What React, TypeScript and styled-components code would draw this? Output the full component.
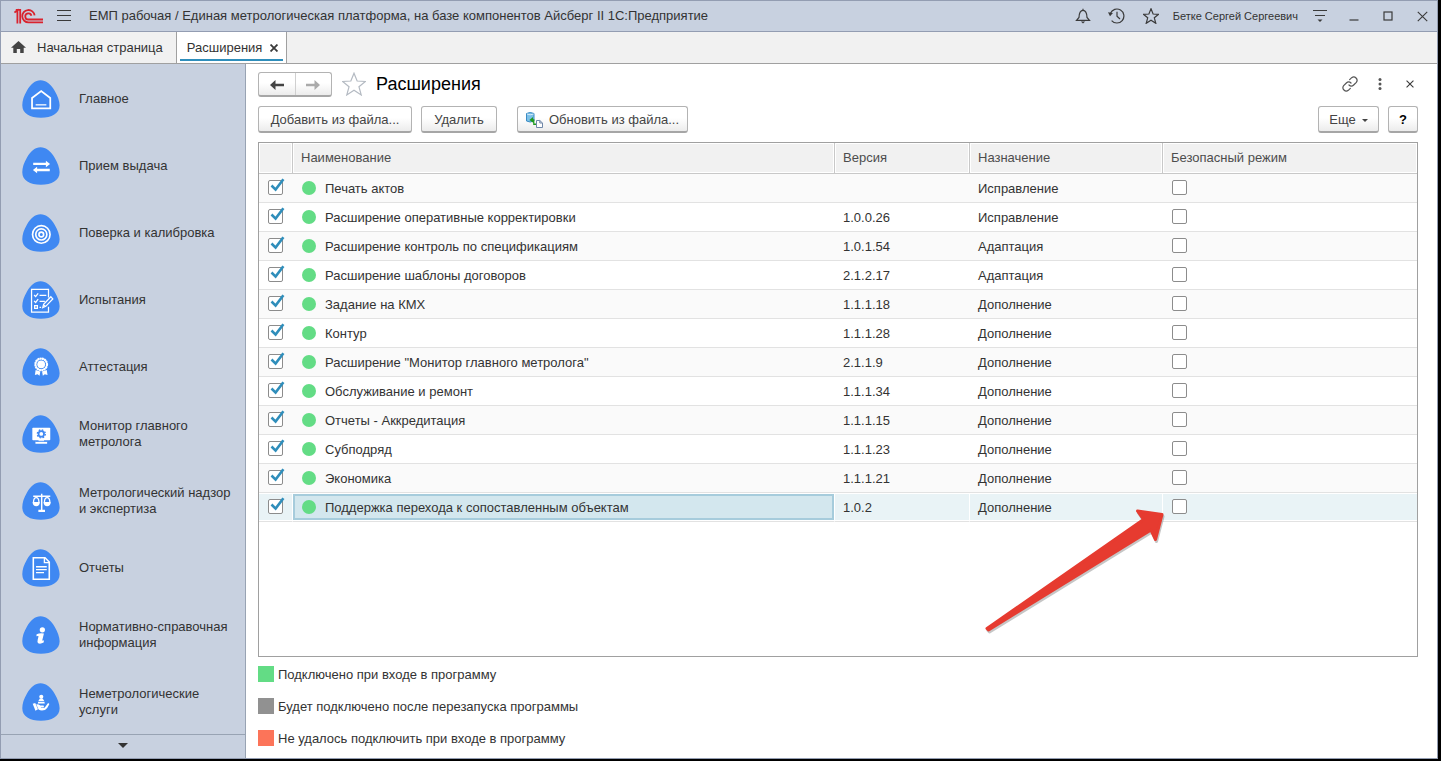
import React from "react";
import styled, { createGlobalStyle, css } from "styled-components";

const GlobalStyle = createGlobalStyle`
  *, *::before, *::after { box-sizing: border-box; }
  body {
    margin: 0;
    background: #000;
    color: #333;
    font-family: "Liberation Sans", Arial, sans-serif;
    font-size: 13px;
    line-height: 16px;
  }
  button { font: inherit; color: inherit; }
`;

const Desktop = styled.div`
  display: flex;
  min-height: 100vh;
  padding: 0 3px 2px 0;
  background: #000;
`;

const Window = styled.div`
  flex: 1;
  min-width: 0;
  display: flex;
  flex-direction: column;
  background: #fff;
  border: 1px solid #939db2;
`;

const TitleBar = styled.header`
  display: flex;
  align-items: center;
  gap: 10px;
  height: 31px;
  padding: 0 3px 0 13px;
  background: #c8d1e0;
  border-bottom: 1px solid #939db2;
`;

const AppTitle = styled.div`
  flex: 1;
  min-width: 0;
  margin-left: 5px;
  font-size: 13px;
  white-space: nowrap;
  overflow: hidden;
`;

const UserName = styled.span`
  font-size: 11px;
  white-space: nowrap;
`;

const IconButton = styled.button<{ $size?: number }>`
  display: flex;
  align-items: center;
  justify-content: center;
  flex: none;
  width: ${(p) => p.$size ?? 24}px;
  height: 24px;
  padding: 0;
  border: 0;
  background: none;
  color: #3a3a3a;
`;

const TabBar = styled.nav`
  display: flex;
  height: 32px;
  background: #f1f1f1;
  border-bottom: 1px solid #a0a0a0;
`;

const Tab = styled.div<{ $active?: boolean }>`
  position: relative;
  display: flex;
  align-items: center;
  padding: 0 13px 0 10px;
  border-right: 1px solid #a0a0a0;
  ${(p) =>
    p.$active &&
    css`
      gap: 4px;
      padding: 0 4px 0 10px;
      background: #fff;
      &::after {
        content: "";
        position: absolute;
        left: 3px;
        right: 3px;
        bottom: 2px;
        height: 2px;
        background: #2f8ebb;
      }
    `}
`;

const TabLink = styled.a`
  display: flex;
  align-items: center;
  gap: 11px;
  color: #333;
  text-decoration: none;
  white-space: nowrap;
`;

const Body = styled.div`
  flex: 1;
  display: flex;
`;

const Sidebar = styled.aside`
  flex: none;
  display: flex;
  flex-direction: column;
  width: 245px;
  background: #c8d1e0;
  border-right: 1px solid #98a3b3;
`;

const SectionLink = styled.a`
  display: flex;
  align-items: center;
  gap: 19px;
  height: 67px;
  padding: 2px 12px 0 21px;
  color: #333;
  text-decoration: none;
`;

const SectionIcon = styled.svg`
  flex: none;
  width: 38px;
  height: 38px;
`;

const ScrollDown = styled.button`
  display: flex;
  align-items: center;
  justify-content: center;
  height: 24px;
  margin-top: auto;
  padding: 0 0 3px;
  border: 0;
  border-top: 1px solid #98a3b3;
  background: none;
`;

const Main = styled.main`
  flex: 1;
  min-width: 0;
  display: flex;
  flex-direction: column;
  padding: 8px 19px 12px 12px;
`;

const PageHeader = styled.div`
  display: flex;
  align-items: flex-start;
  height: 25px;
`;

const raised = css`
  border: 1px solid #b3b3b3;
  border-bottom: 2px solid #a6a6a6;
  border-radius: 3px;
  background: linear-gradient(#fff 45%, #ececec);
`;

const HistoryButtons = styled.div`
  ${raised}
  display: flex;
  width: 74px;
  height: 25px;
`;

const HistoryButton = styled.button`
  flex: 1;
  display: flex;
  align-items: center;
  justify-content: center;
  padding: 2px 0 0;
  border: 0;
  background: none;
  & + & {
    border-left: 1px solid #d0d0d0;
  }
`;

const FavoriteButton = styled(IconButton)`
  margin: 0 10px;
`;

const PageTitle = styled.h1`
  flex: 1;
  margin: 0;
  color: #000;
  font-size: 18px;
  font-weight: 400;
  line-height: 24px;
`;

const HeaderActions = styled.div`
  display: flex;
  gap: 14px;
`;

const Toolbar = styled.div`
  display: flex;
  gap: 9px;
  margin: 9px 0;
`;

const ToolButton = styled.button<{ $width: number; $apart?: boolean; $strong?: boolean }>`
  ${raised}
  display: flex;
  align-items: center;
  justify-content: center;
  gap: 6px;
  min-width: ${(p) => p.$width}px;
  height: 27px;
  margin-left: ${(p) => (p.$apart ? 11 : 0)}px;
  padding: 2px 6px 0;
  color: ${(p) => (p.$strong ? "#000" : "#444")};
  font-weight: ${(p) => (p.$strong ? 700 : 400)};
  white-space: nowrap;
`;

const Spacer = styled.div`
  flex: 1;
`;

const TableFrame = styled.div`
  position: relative;
  flex: 1;
  border: 1px solid #a0a0a0;
`;

const Grid = styled.table`
  width: 100%;
  table-layout: fixed;
  border-collapse: separate;
  border-spacing: 0;
`;

const Col = styled.col<{ $width?: number }>`
  width: ${(p) => (p.$width ? `${p.$width}px` : "auto")};
`;

const HeadCell = styled.th`
  height: 31px;
  padding: 0 8px;
  border-right: 1px solid #c8c8c8;
  border-bottom: 1px solid #c8c8c8;
  background: #f1f1f1;
  box-shadow: inset 0 0 0 1px #fff;
  color: #4d4d4d;
  font-weight: 400;
  text-align: left;
  &:last-child {
    border-right: 0;
  }
`;

const Cell = styled.td<{ $check?: boolean }>`
  height: 29px;
  padding: ${(p) => (p.$check ? 6 : 7)}px 8px 0;
  border-bottom: 1px solid #e2e2e2;
  vertical-align: top;
  white-space: nowrap;
`;

const Row = styled.tr<{ $selected?: boolean }>`
  &:nth-child(odd) ${Cell} {
    background: #fafafa;
  }
  ${(p) =>
    p.$selected &&
    css`
      && ${Cell} {
        background: #e9f3f6;
        border-right: 1px solid #fff;
        box-shadow: inset 0 1px #fff, inset 0 -1px #fff;
      }
      && ${Cell}:last-child {
        border-right: 0;
      }
      && ${Cell}:nth-child(2) {
        background: #d3e7ee;
        box-shadow: inset 0 1px #fff, inset 0 -1px #fff, inset 0 3px #a6ccdc, inset 0 -3px #a6ccdc,
          inset 2px 0 #a6ccdc, inset -2px 0 #a6ccdc;
      }
    `}
`;

const NameBox = styled.div`
  display: flex;
  align-items: flex-start;
  gap: 9px;
  padding-left: 1px;
`;

const Dot = styled.span`
  width: 14px;
  height: 14px;
  border-radius: 50%;
  background: #63dc85;
`;

const CheckWrap = styled.label`
  position: relative;
  display: block;
  width: 15px;
  height: 15px;
  margin-left: 1px;
`;

const CheckBox = styled.input`
  appearance: none;
  display: block;
  width: 15px;
  height: 15px;
  margin: 0;
  border: 1px solid #8c8c8c;
  border-radius: 2px;
  background: #fff;
`;

const CheckMark = styled.svg`
  position: absolute;
  left: 2px;
  top: -2px;
  width: 15px;
  height: 15px;
  pointer-events: none;
`;

const Pointer = styled.svg`
  position: absolute;
  left: 721px;
  top: 358px;
  width: 190px;
  height: 136px;
  pointer-events: none;
`;

const Legend = styled.ul`
  display: flex;
  flex-direction: column;
  gap: 16px;
  margin: 9px 0 0;
  padding: 0;
  list-style: none;
`;

const LegendItem = styled.li`
  display: flex;
  gap: 4px;
  height: 16px;
  line-height: 18px;
`;

const Swatch = styled.span<{ $color: string }>`
  width: 16px;
  height: 16px;
  background: ${(p) => p.$color};
`;

const stroke = { fill: "none", stroke: "currentColor", strokeWidth: 1.2 } as const;

const Logo = () => (
  <svg width="30" height="16" viewBox="0 0 30 16" fill="none" stroke="#d9232e" strokeWidth="1.8">
    <path d="M0.4 4.6 L3.4 2.4 V15.4" />
    <path d="M1.8 1.8 H6.2 V15.4" />
    <path d="M20.6 7.4 A6.2 6.2 0 1 0 14.6 14.4 H29" />
    <path d="M17.4 7.8 A3.1 3.1 0 1 0 14.6 11.5 H29" />
  </svg>
);

const star = "M8 0.8 L10.1 6 L15.6 6.3 L11.3 9.8 L12.8 15.3 L8 12.2 L3.2 15.3 L4.7 9.8 L0.4 6.3 L5.9 6 Z";

const Cross = ({ size, width }: { size: number; width: number }) => (
  <svg width={size} height={size} viewBox="0 0 10 10" {...stroke} strokeWidth={(width * 10) / size}>
    <path d="M0.7 0.7 L9.3 9.3 M9.3 0.7 L0.7 9.3" />
  </svg>
);

const ArrowGlyph = ({ color, flip }: { color: string; flip?: boolean }) => (
  <svg width="14" height="10" viewBox="0 0 14 10" fill={color}>
    <path d={flip ? "M14 5 L8.5 0 V3.7 H0 V6.3 H8.5 V10 Z" : "M0 5 L5.5 0 V3.7 H14 V6.3 H5.5 V10 Z"} />
  </svg>
);

const glyphs: Record<string, React.ReactNode> = {
  home: (
    <g fill="none" stroke="#fff" strokeWidth="1.8">
      <path d="M10.3 29 V18.5 L19.7 11.3 L29 18.5 V29 Z" />
      <path d="M14 25.5 H25" strokeWidth="1.3" />
    </g>
  ),
  exchange: (
    <g fill="#fff">
      <path d="M11.5 16.2 H24.5 V14 L28.8 17.4 L24.5 20.8 V18.6 H11.5 Z" />
      <path d="M28.5 22.4 H15.5 V20.2 L11.2 23.6 L15.5 27 V24.8 H28.5 Z" />
    </g>
  ),
  target: (
    <g fill="none" stroke="#fff" strokeWidth="1.7">
      <circle cx="19.8" cy="21" r="9" />
      <circle cx="19.8" cy="21" r="5.7" />
      <circle cx="19.8" cy="21" r="2.4" />
    </g>
  ),
  checklist: (
    <g fill="none" stroke="#fff" strokeWidth="1.3">
      <path d="M27.2 17 V8.5 H9.8 V32 H27.2 V26.5" />
      <path d="M12.4 14.4 L14 16 L16.6 12.6 M18 14.8 H25 M12.4 20.4 L14 22 L16.6 18.6 M18 20.8 H23.5 M13 25.2 H15.8 V28 H13 Z M18 27 H19.6" />
      <path d="M21.3 27.4 L22.2 24 L29.6 16.2 L31.6 18.4 L24.4 26 Z" />
      <path d="M22.6 24.8 L24 26.2" />
    </g>
  ),
  award: (
    <g>
      <circle cx="19.7" cy="16.8" r="6" fill="none" stroke="#fff" strokeWidth="2.2" strokeDasharray="1.9 0.46" />
      <circle cx="19.7" cy="16.8" r="5.8" fill="none" stroke="#fff" strokeWidth="1.2" />
      <circle cx="19.7" cy="16.8" r="4" fill="#fff" />
      <path d="M14 22.5 L18.8 24.2 L18 28.6 L16 27 L13.2 27.6 Z M25.4 22.5 L20.6 24.2 L21.4 28.6 L23.4 27 L26.2 27.6 Z" fill="#fff" />
    </g>
  ),
  monitor: (
    <g>
      <rect x="10.6" y="13" width="18.4" height="13" rx="0.8" fill="#fff" />
      <path d="M17 26 H22.6 V27.2 H25.8 V29.4 H13.8 V27.2 H17 Z" fill="#fff" />
      <path d="M13.8 27.2 H25.8" stroke="#3f88f2" strokeWidth="0.8" />
      <circle cx="19.8" cy="19.4" r="2.8" fill="none" stroke="#3f88f2" strokeWidth="1.8" />
      <circle cx="19.8" cy="19.4" r="4.1" fill="none" stroke="#3f88f2" strokeWidth="1.4" strokeDasharray="1.7 1.52" />
    </g>
  ),
  scales: (
    <g fill="none" stroke="#fff" strokeWidth="1.5">
      <path d="M20.2 12 V29 M11.5 14.6 H29" />
      <path d="M11.8 20.6 Q12 16 14.6 16 Q17.2 16 17.4 20.6 M23 20.6 Q23.2 16 25.8 16 Q28.4 16 28.6 20.6" strokeWidth="1.3" />
      <path
        d="M10.8 20.4 H18.4 Q17.9 24.8 14.6 24.8 Q11.3 24.8 10.8 20.4 Z M22 20.4 H29.6 Q29.1 24.8 25.8 24.8 Q22.5 24.8 22 20.4 Z M16.8 28.6 H23.6 V30.8 H16.8 Z"
        fill="#fff"
        stroke="none"
      />
    </g>
  ),
  report: (
    <g fill="none" stroke="#fff" strokeWidth="1.6">
      <path d="M11.6 9 H23.6 L28 13.4 V31 H11.6 Z" />
      <path d="M23 9 V14 H28 M14.4 18.2 H25.4 M14.4 21.2 H25.4 M14.4 24.2 H22.6" strokeWidth="1.4" />
    </g>
  ),
  info: (
    <g fill="#fff">
      <circle cx="20.9" cy="14.2" r="2.7" />
      <path d="M15 18.8 Q18.6 17 22.5 18 L20.8 25 Q21.2 25.8 22.6 25 L22.2 27.2 Q19 29 16.6 28 Q15.4 27 16.1 24.4 L17 20.8 Q16.6 20.4 14.8 20.8 Z" />
    </g>
  ),
  service: (
    <g fill="#fff">
      <circle cx="19.8" cy="14.2" r="2.1" />
      <path d="M18.2 16.2 H21.4 L22.8 18.4 H16.8 Z M16.6 19.2 H23 L23.4 21 H16.2 Z" />
      <path d="M11 21.4 L13.6 20.4 L16.4 27 L13.8 28.4 Z" />
      <path d="M14.6 21.8 Q17 21.4 18.8 23 H22 Q23.4 23.8 22 24.8 H19.4 V25.3 H23.2 L26.6 20.9 Q28 20.4 28 21.8 Q26.2 26 23.6 27.8 Q19.4 29 17 27.2 Z" />
    </g>
  ),
};

const sections: [string, string][] = [
  ["home", "Главное"],
  ["exchange", "Прием выдача"],
  ["target", "Поверка и калибровка"],
  ["checklist", "Испытания"],
  ["award", "Аттестация"],
  ["monitor", "Монитор главного метролога"],
  ["scales", "Метрологический надзор и экспертиза"],
  ["report", "Отчеты"],
  ["info", "Нормативно-справочная информация"],
  ["service", "Неметрологические услуги"],
];

const extensions: [string, string, string][] = [
  ["Печать актов", "", "Исправление"],
  ["Расширение оперативные корректировки", "1.0.0.26", "Исправление"],
  ["Расширение контроль по спецификациям", "1.0.1.54", "Адаптация"],
  ["Расширение шаблоны договоров", "2.1.2.17", "Адаптация"],
  ["Задание на КМХ", "1.1.1.18", "Дополнение"],
  ["Контур", "1.1.1.28", "Дополнение"],
  ['Расширение "Монитор главного метролога"', "2.1.1.9", "Дополнение"],
  ["Обслуживание и ремонт", "1.1.1.34", "Дополнение"],
  ["Отчеты - Аккредитация", "1.1.1.15", "Дополнение"],
  ["Субподряд", "1.1.1.23", "Дополнение"],
  ["Экономика", "1.1.1.21", "Дополнение"],
  ["Поддержка перехода к сопоставленным объектам", "1.0.2", "Дополнение"],
];

const legend: [string, string][] = [
  ["#63dc85", "Подключено при входе в программу"],
  ["#919191", "Будет подключено после перезапуска программы"],
  ["#fc7459", "Не удалось подключить при входе в программу"],
];

const TitleArea = () => (
  <TitleBar>
    <Logo />
    <IconButton $size={20} aria-label="Меню">
      <svg width="14" height="12" viewBox="0 0 14 12" {...stroke} strokeWidth="1">
        <path d="M0 0.5 H14 M0 5.5 H14 M0 10.5 H14" />
      </svg>
    </IconButton>
    <AppTitle>
      ЕМП рабочая / Единая метрологическая платформа, на базе компонентов Айсберг II 1С:Предприятие
    </AppTitle>
    <IconButton aria-label="Уведомления">
      <svg width="16" height="16" viewBox="0 0 16 16" {...stroke}>
        <path d="M1.5 12.4 L4 9.5 Q4.2 2.3 8 2.3 Q11.8 2.3 12 9.5 L14.5 12.4 Z M8 2.3 V0.8" />
        <path d="M5.8 13.6 H10.2 L8 15.4 Z" fill="currentColor" stroke="none" />
      </svg>
    </IconButton>
    <IconButton aria-label="История">
      <svg width="17" height="16" viewBox="0 0 17 16" {...stroke}>
        <path d="M2.4 5.4 A7 7 0 1 1 3.6 12.6 M9 3.8 V8.3 L12 11" />
        <path d="M0 4.2 L5 5 L2 8.2 Z" fill="currentColor" stroke="none" />
      </svg>
    </IconButton>
    <IconButton aria-label="Избранное">
      <svg width="16" height="16" viewBox="0 0 16 16" {...stroke}>
        <path d={star} />
      </svg>
    </IconButton>
    <UserName>Бетке Сергей Сергеевич</UserName>
    <IconButton aria-label="Настройки">
      <svg width="14" height="14" viewBox="0 0 14 14" {...stroke}>
        <path d="M0 1.5 H14 M2 6.5 H12" />
        <path d="M4.5 10.5 H9.5 L7 13 Z" fill="currentColor" stroke="none" />
      </svg>
    </IconButton>
    <IconButton aria-label="Свернуть">
      <svg width="10" height="10" viewBox="0 0 10 10" {...stroke}>
        <path d="M0.5 9 H9.5" />
      </svg>
    </IconButton>
    <IconButton aria-label="Развернуть">
      <svg width="10" height="10" viewBox="0 0 10 10" {...stroke}>
        <rect x="1" y="1" width="8" height="8" />
      </svg>
    </IconButton>
    <IconButton aria-label="Закрыть">
      <Cross size={11} width={1.1} />
    </IconButton>
  </TitleBar>
);

const Tabs = () => (
  <TabBar>
    <Tab>
      <TabLink href="#home">
        <svg width="15" height="13" viewBox="0 0 15 13" fill="#444">
          <path d="M7.5 0 L15 6.8 H12.7 V12 H9.2 V8 H5.8 V12 H2.3 V6.8 H0 Z" />
        </svg>
        Начальная страница
      </TabLink>
    </Tab>
    <Tab $active>
      <TabLink href="#extensions">Расширения</TabLink>
      <IconButton $size={16} aria-label="Закрыть вкладку">
        <Cross size={8} width={1.8} />
      </IconButton>
    </Tab>
  </TabBar>
);

const Sections = () => (
  <Sidebar>
    {sections.map(([icon, label]) => (
      <SectionLink key={icon} href={`#${icon}`}>
        <SectionIcon viewBox="0 0 39 39">
          <path
            d="M19 0.3 C24.5 0.3 29.5 4.3 33.5 11 C36.5 16 38.6 21.5 38.6 26 C38.6 34.5 30.5 38.8 19.4 38.8 C8 38.8 0.3 34.5 0.3 26 C0.3 21 2 16 5 11 C9 4.3 13.5 0.3 19 0.3 Z"
            fill="#3f88f2"
          />
          {glyphs[icon]}
        </SectionIcon>
        {label}
      </SectionLink>
    ))}
    <ScrollDown aria-label="Прокрутить вниз">
      <svg width="10" height="5" viewBox="0 0 10 5" fill="#333">
        <path d="M0 0 H10 L5 5 Z" />
      </svg>
    </ScrollDown>
  </Sidebar>
);

const Check = ({ label, checked }: { label: string; checked?: boolean }) => (
  <CheckWrap>
    <CheckBox type="checkbox" aria-label={label} defaultChecked={checked} />
    {checked && (
      <CheckMark viewBox="0 0 15 15">
        <path d="M1.5 7.5 L5.6 11.6 L13.4 1.2" fill="none" stroke="#2f8ebb" strokeWidth="2.6" />
      </CheckMark>
    )}
  </CheckWrap>
);

const ExtensionsTable = () => (
  <TableFrame>
    <Grid>
      <colgroup>
        <Col $width={34} />
        <Col $width={542} />
        <Col $width={135} />
        <Col $width={193} />
        <Col />
      </colgroup>
      <thead>
        <tr>
          <HeadCell />
          <HeadCell>Наименование</HeadCell>
          <HeadCell>Версия</HeadCell>
          <HeadCell>Назначение</HeadCell>
          <HeadCell>Безопасный режим</HeadCell>
        </tr>
      </thead>
      <tbody>
        {extensions.map(([name, version, purpose], i) => (
          <Row key={name} $selected={i === extensions.length - 1}>
            <Cell $check>
              <Check label={`Подключить: ${name}`} checked />
            </Cell>
            <Cell>
              <NameBox>
                <Dot />
                {name}
              </NameBox>
            </Cell>
            <Cell>{version}</Cell>
            <Cell>{purpose}</Cell>
            <Cell $check>
              <Check label={`Безопасный режим: ${name}`} />
            </Cell>
          </Row>
        ))}
      </tbody>
    </Grid>
    <Pointer viewBox="0 0 190 136">
      <g strokeLinejoin="round" strokeWidth="3">
        <path
          d="M182 13.5 L157.5 10 L163.5 18.5 L7 127.5 L8.5 129 L171 29 L175.5 38.5 Z"
          fill="#000"
          stroke="#000"
          opacity="0.22"
          transform="translate(1 2)"
        />
        <path d="M182 13.5 L157.5 10 L163.5 18.5 L7 127.5 L8.5 129 L171 29 L175.5 38.5 Z" fill="#e63b30" stroke="#e63b30" />
      </g>
    </Pointer>
  </TableFrame>
);

export default function App() {
  return (
    <>
      <GlobalStyle />
      <Desktop>
        <Window>
          <TitleArea />
          <Tabs />
          <Body>
            <Sections />
            <Main>
              <PageHeader>
                <HistoryButtons>
                  <HistoryButton aria-label="Назад">
                    <ArrowGlyph color="#444" />
                  </HistoryButton>
                  <HistoryButton aria-label="Вперед">
                    <ArrowGlyph color="#aaa" flip />
                  </HistoryButton>
                </HistoryButtons>
                <FavoriteButton aria-label="В избранное">
                  <svg width="24" height="24" viewBox="0 0 16 16" fill="none" stroke="#b4bac2" strokeWidth="0.8">
                    <path d={star} />
                  </svg>
                </FavoriteButton>
                <PageTitle>Расширения</PageTitle>
                <HeaderActions>
                  <IconButton $size={16} aria-label="Ссылка">
                    <svg width="16" height="16" viewBox="0 0 24 24" fill="none" stroke="#555" strokeWidth="1.8" strokeLinecap="round">
                      <path d="M10.5 13.5 a5 5 0 0 0 7 0 l4-4 a5 5 0 0 0 -7 -7 l-3 3" />
                      <path d="M13.5 10.5 a5 5 0 0 0 -7 0 l-4 4 a5 5 0 0 0 7 7 l3-3" />
                    </svg>
                  </IconButton>
                  <IconButton $size={16} aria-label="Действия">
                    <svg width="4" height="12" viewBox="0 0 4 12" fill="#555">
                      <circle cx="2" cy="1.6" r="1.5" />
                      <circle cx="2" cy="6" r="1.5" />
                      <circle cx="2" cy="10.4" r="1.5" />
                    </svg>
                  </IconButton>
                  <IconButton $size={16} aria-label="Закрыть форму">
                    <Cross size={8} width={1.1} />
                  </IconButton>
                </HeaderActions>
              </PageHeader>
              <Toolbar>
                <ToolButton $width={154}>Добавить из файла...</ToolButton>
                <ToolButton $width={76}>Удалить</ToolButton>
                <ToolButton $width={171} $apart>
                  <svg width="17" height="16" viewBox="0 0 17 16">
                    <path d="M0.5 1.5 Q4 -0.5 8 1.5 V9 Q4 11 0.5 9 Z" fill="#7cc0e8" stroke="#3c8cc4" />
                    <path d="M1 2 Q4 3.6 7.6 2" fill="none" stroke="#d6eefb" />
                    <path d="M3.4 8 L7 5 V7.2 H8.4 V11.6 H10 V13 H7.2 V10.8 Z" fill="#1f9a1f" />
                    <path d="M10.5 8.5 H13.8 L16.5 11 V15.5 H10.5 Z M13.8 8.5 V11 H16.5" fill="#fff" stroke="#6f87a8" />
                  </svg>
                  Обновить из файла...
                </ToolButton>
                <Spacer />
                <ToolButton $width={61}>
                  Еще
                  <svg width="6" height="3" viewBox="0 0 6 3" fill="#444">
                    <path d="M0 0 H6 L3 3 Z" />
                  </svg>
                </ToolButton>
                <ToolButton $width={30} $strong>
                  ?
                </ToolButton>
              </Toolbar>
              <ExtensionsTable />
              <Legend>
                {legend.map(([color, text]) => (
                  <LegendItem key={text}>
                    <Swatch $color={color} />
                    {text}
                  </LegendItem>
                ))}
              </Legend>
            </Main>
          </Body>
        </Window>
      </Desktop>
    </>
  );
}
